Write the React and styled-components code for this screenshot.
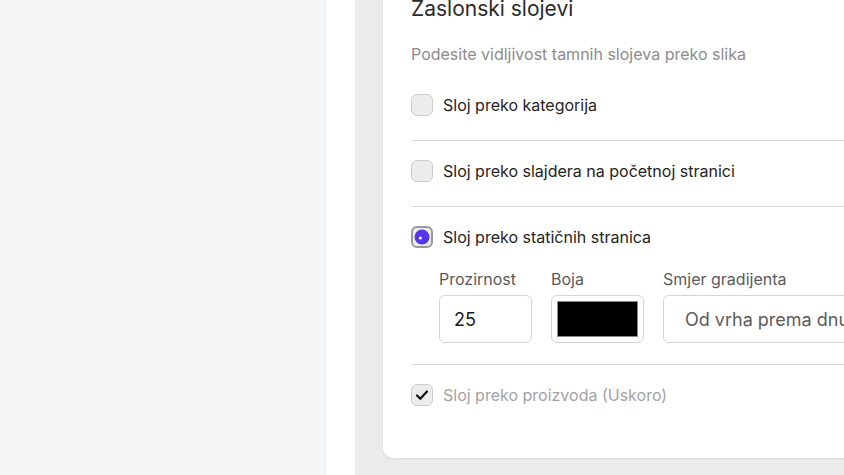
import React from 'react';
import styled, { createGlobalStyle } from 'styled-components';

const Global = createGlobalStyle`
  html, body {
    margin: 0;
    padding: 0;
    overflow: hidden;
  }
  body {
    font-family: Inter, "Noto Sans", sans-serif;
    -webkit-font-smoothing: antialiased;
  }
`;

const Screen = styled.div`
  display: flex;
  width: 844px;
  height: 475px;
  overflow: hidden;
`;

const Sidebar = styled.aside`
  flex: 0 0 327px;
  background: #f4f5f7;
`;

const Gutter = styled.div`
  flex: 0 0 28px;
  background: #ffffff;
`;

const Main = styled.main`
  flex: 1;
  background: #ebebeb;
  padding-left: 28px;
  min-width: 0;
`;

const Card = styled.section`
  width: 620px;
  margin-top: -20px;
  height: 478px;
  box-sizing: border-box;
  background: #ffffff;
  border-radius: 10px;
  box-shadow: 0 1px 3px rgba(0, 0, 0, 0.08);
  padding: 15px 0 0 28px;
`;

const Title = styled.h2`
  margin: 0;
  font-size: 21px;
  line-height: 28px;
  font-weight: 400;
  color: #2b2b2b;
`;

const Subtitle = styled.p`
  margin: 20px 0 0;
  font-size: 16px;
  line-height: 22px;
  color: #8c8c8c;
`;

const Section = styled.div`
  padding: ${(p) => (p.$first ? '29px 0 24px' : '19px 0 24px')};
  border-bottom: ${(p) => (p.$last ? 'none' : '1px solid #dadada')};
`;

const Row = styled.label`
  display: flex;
  align-items: center;
  gap: 10px;
  font-size: 16px;
  line-height: 22px;
  color: ${(p) => (p.$disabled ? '#a3a3a3' : '#242424')};
`;

const Box = styled.span`
  flex: 0 0 auto;
  width: 22px;
  height: 22px;
  box-sizing: border-box;
  border-radius: 6px;
  border: 1px solid #cdcdcd;
  background: #ececec;
  display: flex;
  align-items: center;
  justify-content: center;
`;

const Options = styled.div`
  display: flex;
  gap: 19px;
  margin: 20px 0 0 28px;
`;

const Field = styled.div`
  display: flex;
  flex-direction: column;
  gap: 5px;
`;

const FieldLabel = styled.span`
  font-size: 16px;
  line-height: 22px;
  color: #5a5a5a;
`;

const Input = styled.div`
  width: ${(p) => p.$w}px;
  height: 48px;
  box-sizing: border-box;
  border: 1px solid #d4d4d4;
  border-radius: 6px;
  background: #fff;
  display: flex;
  align-items: center;
  padding: ${(p) => (p.$swatch ? '5px' : '0 14px')};
  font-size: 18px;
  color: ${(p) => (p.$muted ? '#5c5c5c' : '#1c1c1c')};
  white-space: nowrap;
  overflow: hidden;
`;

const Swatch = styled.span`
  flex: 1;
  align-self: stretch;
  background: #000;
  border: 1px solid #8a8a8a;
`;

const CheckedRadio = () => (
  <Box style={{ borderColor: '#9a9a9a', borderWidth: 2 }}>
    <svg width="16" height="16" viewBox="0 0 16 16">
      <circle cx="8" cy="8" r="7.5" fill="#5535ee" />
      <circle cx="6.3" cy="9" r="1.6" fill="#ffffff" />
    </svg>
  </Box>
);

const Tick = () => (
  <Box>
    <svg width="16" height="16" viewBox="0 0 16 16">
      <path d="M3 8.5 L6.3 11.8 L13 4.5" fill="none" stroke="#111" strokeWidth="2.2" strokeLinecap="round" strokeLinejoin="round" />
    </svg>
  </Box>
);

const App = () => (
  <Screen>
    <Global />
    <Sidebar />
    <Gutter />
    <Main>
      <Card>
        <Title>Zaslonski slojevi</Title>
        <Subtitle>Podesite vidljivost tamnih slojeva preko slika</Subtitle>
        <Section $first>
          <Row>
            <Box />
            Sloj preko kategorija
          </Row>
        </Section>
        <Section>
          <Row>
            <Box />
            Sloj preko slajdera na početnoj stranici
          </Row>
        </Section>
        <Section style={{ paddingBottom: 21 }}>
          <Row>
            <CheckedRadio />
            Sloj preko statičnih stranica
          </Row>
          <Options>
            <Field>
              <FieldLabel>Prozirnost</FieldLabel>
              <Input $w={93}>25</Input>
            </Field>
            <Field>
              <FieldLabel>Boja</FieldLabel>
              <Input $w={93} $swatch>
                <Swatch />
              </Input>
            </Field>
            <Field>
              <FieldLabel>Smjer gradijenta</FieldLabel>
              <Input $w={260} $muted style={{ paddingLeft: 21 }}>Od vrha prema dnu</Input>
            </Field>
          </Options>
        </Section>
        <Section $last>
          <Row $disabled>
            <Tick />
            Sloj preko proizvoda (Uskoro)
          </Row>
        </Section>
      </Card>
    </Main>
  </Screen>
);

export default App;
